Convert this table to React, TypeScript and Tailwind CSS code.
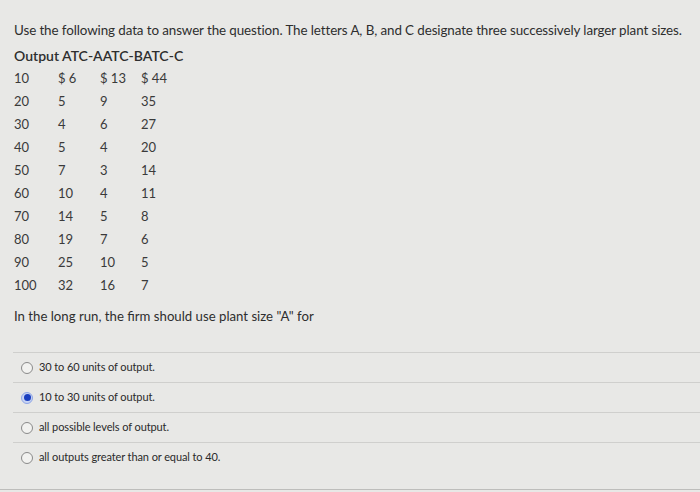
import React from 'react';

type Row = [string, string, string, string];

const rows: Row[] = [
  ['10', '$ 6', '$ 13', '$ 44'],
  ['20', '5', '9', '35'],
  ['30', '4', '6', '27'],
  ['40', '5', '4', '20'],
  ['50', '7', '3', '14'],
  ['60', '10', '4', '11'],
  ['70', '14', '5', '8'],
  ['80', '19', '7', '6'],
  ['90', '25', '10', '5'],
  ['100', '32', '16', '7'],
];

const options = [
  { label: '30 to 60 units of output.', checked: false },
  { label: '10 to 30 units of output.', checked: true },
  { label: 'all possible levels of output.', checked: false },
  { label: 'all outputs greater than or equal to 40.', checked: false },
];

const Radio: React.FC<{ checked: boolean }> = ({ checked }) =>
  checked ? (
    <span className="flex h-[12px] w-[12px] items-center justify-center rounded-full border border-[#8fa6e6] bg-[#c9d4f3]">
      <span className="h-[7px] w-[7px] rounded-full bg-[#1b3fbf]" />
    </span>
  ) : (
    <span className="h-[12px] w-[12px] rounded-full border border-[#8a8a8a] bg-[#f2f2f0]" />
  );

const App: React.FC = () => {
  return (
    <div className="h-[492px] w-[700px] overflow-hidden bg-[#e8e8e6] font-['Lato',sans-serif] text-[#2e2e2e]">
      <div className="flex h-[490px] flex-col border-b border-[#bdbdbb] pt-[20px]">
        <p className="pl-[14px] text-[13.4px] leading-[20px] tracking-[-0.1px]">
          Use the following data to answer the question. The letters A, B, and C designate three successively larger plant sizes.
        </p>

        <div className="mt-[4px] pl-[14px] text-[13px] leading-[23px]">
          <div className="text-[14px] font-semibold">Output ATC-AATC-BATC-C</div>
          {rows.map(r => (
            <div key={r[0]} className="flex text-[#3a3a3a]">
              <span className="w-[44px]">{r[0]}</span>
              <span className="w-[42px]">{r[1]}</span>
              <span className="w-[41px]">{r[2]}</span>
              <span>{r[3]}</span>
            </div>
          ))}
        </div>

        <p className="mt-[9px] pl-[14px] text-[13.2px] leading-[20px]">
          In the long run, the firm should use plant size "A" for
        </p>

        <div className="mt-[26px] pl-[13px]">
          {options.map(o => (
            <div key={o.label} className="flex h-[30px] items-center gap-[6px] border-t border-[#cfcfcd] pl-[8px] text-[11px] text-[#2a2a2a]">
              <Radio checked={o.checked} />
              <span className="tracking-[-0.1px]">{o.label}</span>
            </div>
          ))}
        </div>
      </div>
    </div>
  );
};

export default App;
